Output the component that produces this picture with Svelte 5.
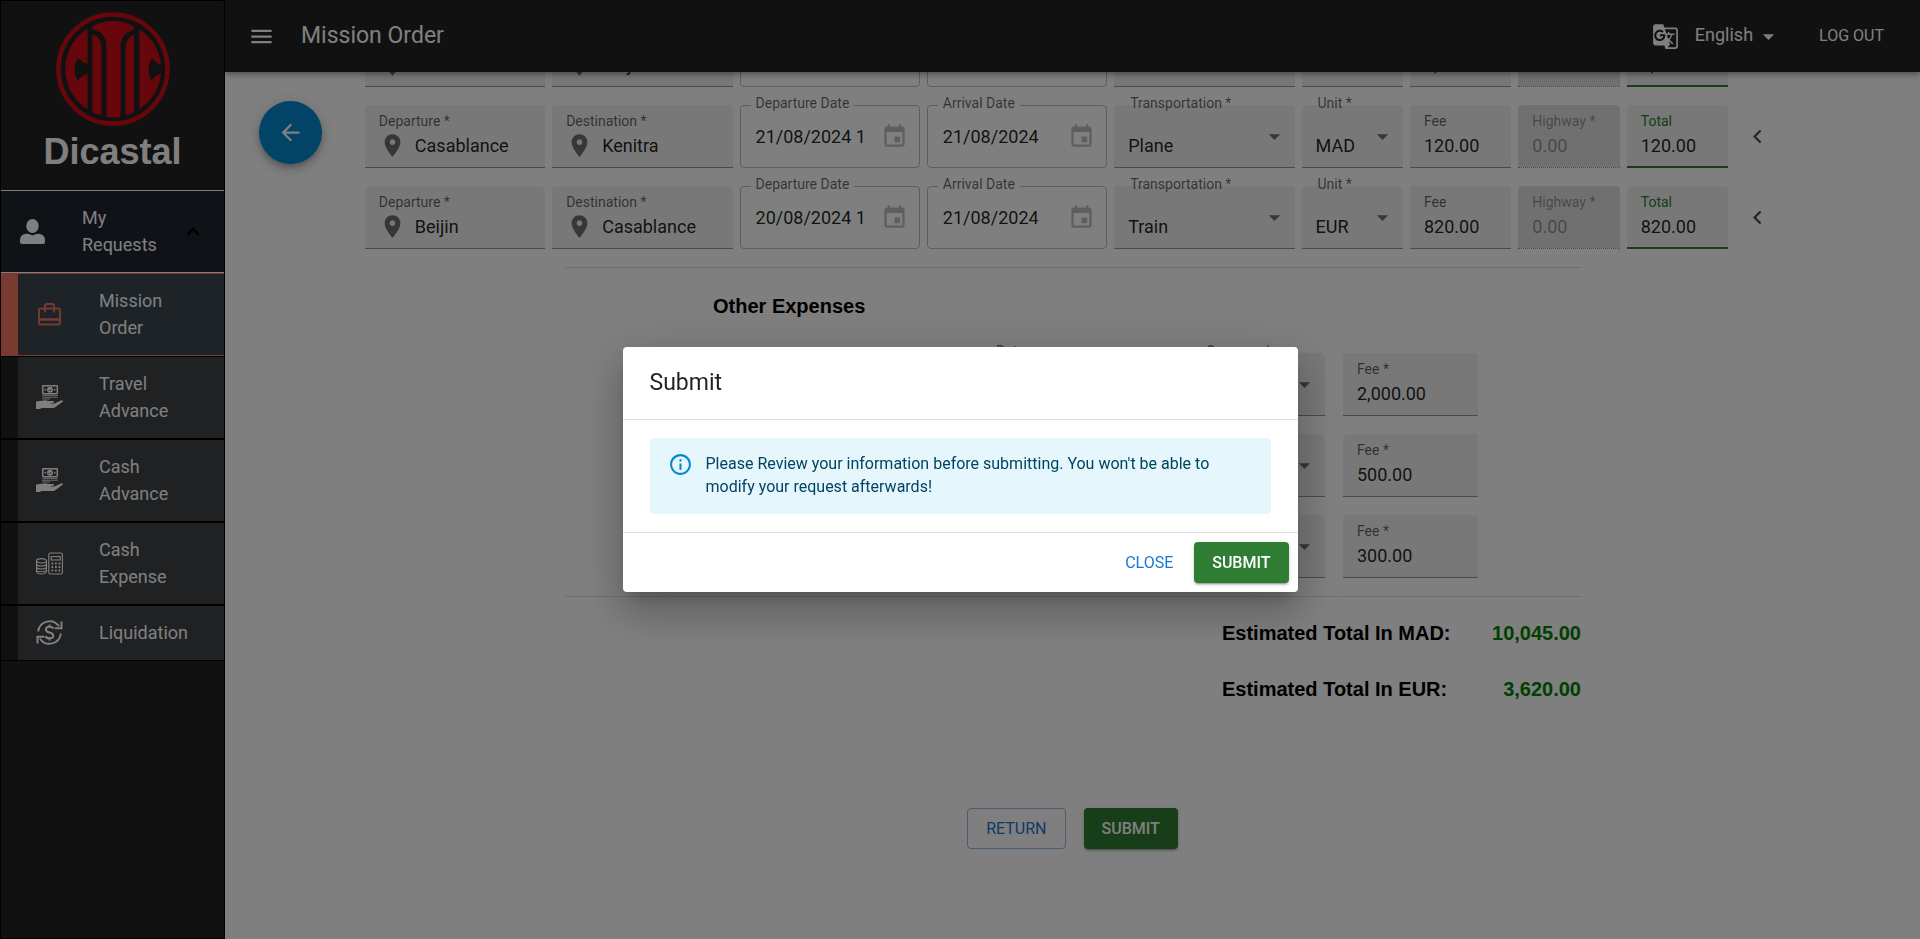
<script>
  const trips = [
    { from: 'Casablance', to: 'Beijin', dep: '18/08/2024 1', arr: '19/08/2024', by: 'Plane', unit: 'EUR', fee: '2,800.00', total: '2,800.00' },
    { from: 'Casablance', to: 'Kenitra', dep: '21/08/2024 10:00', arr: '21/08/2024', by: 'Plane', unit: 'MAD', fee: '120.00', total: '120.00' },
    { from: 'Beijin', to: 'Casablance', dep: '20/08/2024 10:00', arr: '21/08/2024', by: 'Train', unit: 'EUR', fee: '820.00', total: '820.00' }
  ];
  const expenses = [
    { fee: '2,000.00' },
    { fee: '500.00' },
    { fee: '300.00' }
  ];
  const totals = [
    { label: 'Estimated Total In MAD:', value: '10,045.00' },
    { label: 'Estimated Total In EUR:', value: '3,620.00' }
  ];
  const menu = [
    { label: 'Mission Order', icon: 'bag', active: true },
    { label: 'Travel Advance', icon: 'cash' },
    { label: 'Cash Advance', icon: 'cash' },
    { label: 'Cash Expense', icon: 'calc' },
    { label: 'Liquidation', icon: 'cycle' }
  ];
</script>

{#snippet pin()}
  <svg class="icon pin" viewBox="0 0 24 24"><path d="M12 2C8.13 2 5 5.13 5 9c0 5.25 7 13 7 13s7-7.75 7-13c0-3.87-3.13-7-7-7zm0 9.5c-1.38 0-2.5-1.12-2.5-2.5s1.12-2.5 2.5-2.5 2.5 1.12 2.5 2.5-1.12 2.5-2.5 2.5z" /></svg>
{/snippet}

{#snippet caret()}
  <svg class="icon caret" viewBox="0 0 24 24"><path d="M7 10l5 5 5-5z" /></svg>
{/snippet}

{#snippet filled(id, label, value, kind)}
  <div class="field filled {kind}">
    <label for={id}>{label}</label>
    <div class="value">
      {#if kind === 'place'}{@render pin()}{/if}
      <input {id} type="text" {value} disabled={kind === 'disabled'} />
    </div>
  </div>
{/snippet}

{#snippet dated(id, label, value)}
  <fieldset class="field outlined">
    <legend><label for={id}>{label}</label></legend>
    <div class="value">
      <input {id} type="text" {value} />
      <svg class="icon event" viewBox="0 0 24 24"><path d="M17 12h-5v5h5v-5zM16 1v2H8V1H6v2H5c-1.11 0-1.99.9-1.99 2L3 19c0 1.1.89 2 2 2h14c1.1 0 2-.9 2-2V5c0-1.1-.9-2-2-2h-1V1h-2zm3 18H5V8h14v11z" /></svg>
    </div>
  </fieldset>
{/snippet}

{#snippet picked(id, label, value)}
  <div class="field select">
    <label for={id}>{label}</label>
    <select {id}><option>{value}</option></select>
    {@render caret()}
  </div>
{/snippet}

<div class="app">
  <aside>
    <div class="brand">
      <svg viewBox="0 0 114 114" class="logo">
        <circle cx="57" cy="57" r="54.5" fill="none" stroke="#ce0e16" stroke-width="4.6" />
        <g fill="#ce0e16">
          <path d="M31.500 16.500V52Q26 50.500 22.500 46.500Q18.500 50 18.500 57.500Q18.500 65 22 68.500Q26 63 31.500 62V97.500A48 48 0 0 1 31.500 16.500Z" />
          <path d="M36.500 22.500Q45.500 25 45.500 36V103.500L36.500 100.500Z" />
          <path d="M36.500 14.500Q45 9 57 9Q69 9 78 14.500V17.500Q64.500 22 64.500 34V105Q57 106 50.500 105V34Q50 20 36.500 17.500Z" />
          <path d="M78 22.500Q69.500 26 69.500 36V103.500L78 100.500Z" />
          <path d="M83.500 17.500Q103 31 105 53Q100 51.500 96.500 46.500Q92.500 50 92.500 57.500Q92.500 65 96 68.500Q99.500 63 105 61.500Q102.500 84 83.500 97Z" />
        </g>
      </svg>
      <h1>Dicastal</h1>
    </div>
    <button class="group">
      <svg class="user" viewBox="0 0 25 25"><ellipse cx="12.500" cy="7" rx="6.200" ry="7" /><path d="M0 21.500Q0 15.500 6 14.800Q9 14.500 12.500 16.500Q16 14.500 19 14.800Q25 15.500 25 21.500V23Q25 25 23 25H2Q0 25 0 23Z" /></svg>
      <span>My Requests</span>
      <svg class="chev" viewBox="0 0 14 9"><path d="M1.200 7.800L7 2L12.800 7.800" fill="none" stroke="#000" stroke-width="2.400" /></svg>
    </button>
    <nav>
      {#each menu as item}
        <a href="#top" class:active={item.active}>
          {#if item.icon === 'bag'}
            <svg class="mi" viewBox="0 0 27 27" fill="none" stroke="currentColor" stroke-width="1.900"><rect x="3" y="7.500" width="21" height="16" rx="2" /><path d="M3 18.500H24" stroke-width="2.400" /><path d="M9 11.500V5Q9 3 11 3H16Q18 3 18 5V11.500" /></svg>
          {:else if item.icon === 'cash'}
            <svg class="mi" viewBox="0 0 27 27" fill="none"><rect x="6.700" y="1.700" width="14.600" height="8" rx=".6" stroke="currentColor" stroke-width="1.500" /><circle cx="14" cy="5.700" r="3" fill="currentColor" /><circle cx="9.300" cy="5.700" r=".9" fill="currentColor" /><circle cx="18.700" cy="5.700" r=".9" fill="currentColor" /><path d="M12.500 5.800L13.700 7L15.700 4.700" stroke="#3e4246" stroke-width=".8" /><path d="M6.200 11.600H21.800M6.200 13.300H21.800M6.200 15H14" stroke="currentColor" stroke-width="1" opacity=".75" /><path fill="currentColor" d="M0 17.500L8 16.500Q10 16 12 17H17Q18.500 17.200 18 18.500L13 19.500L18.500 19.600L25 16.400Q27 16 27 17.500L19.500 23Q18.500 24 17 24H6L3.500 25H0Z" /></svg>
          {:else if item.icon === 'calc'}
            <svg class="mi" viewBox="0 0 27 27" fill="none" stroke="currentColor" stroke-width="1.100"><rect x="12.800" y="3" width="13.600" height="21" rx="1.600" /><rect x="15.200" y="6.600" width="9" height="3.400" /><path d="M15.500 13.500H24.500M15.500 17H24.500M15.500 20.500H24.500" stroke-width="1.800" stroke-dasharray="1.800 1.700" /><ellipse cx="5.500" cy="10.800" rx="5" ry="2.200" /><path d="M.5 10.800V21.500Q1 24 5.500 24Q10 24 10.500 21.500V10.800M.5 14Q1 16 5.500 16Q10 16 10.500 14M.5 17Q1 19 5.500 19Q10 19 10.500 17M.5 19.800Q1 21.800 5.500 21.800Q10 21.800 10.500 19.800" /></svg>
          {:else}
            <svg class="mi" viewBox="0 0 27 27" fill="none" stroke="currentColor" stroke-width="2"><path d="M2.200 12.500A11.400 11.400 0 0 1 23 7.300M24.800 14.500A11.400 11.400 0 0 1 4 19.700" /><path d="M25.500 2.500V9.300H18.700M1.500 24.500V17.700H8.300" /><path d="M17.300 9.800Q16.800 7.700 13.500 7.700Q9.900 7.700 9.900 10.400Q9.900 12.700 13.500 13.500Q17.300 14.300 17.300 16.800Q17.300 19.300 13.500 19.300Q9.900 19.300 9.600 17M13.500 5.500V7.700M13.500 19.300V21.600" /></svg>
          {/if}
          <span>{item.label}</span>
        </a>
      {/each}
    </nav>
  </aside>

  <main>
    <header>
      <button class="plain" aria-label="Menu"><svg class="icon" viewBox="0 0 24 24"><path d="M3 18h18v-2H3v2zm0-5h18v-2H3v2zm0-7v2h18V6H3z" /></svg></button>
      <h2>Mission Order</h2>
      <button class="plain lang">
        <svg class="icon" viewBox="0 0 24 24"><path d="M21 4H11l-1-3H3c-1.100 0-2 .9-2 2v15c0 1.100.9 2 2 2h8l1 3h9c1.100 0 2-.9 2-2V6c0-1.100-.9-2-2-2zM7 16c-2.760 0-5-2.240-5-5s2.240-5 5-5c1.350 0 2.480.5 3.350 1.300L9.030 8.570c-.38-.36-1.040-.78-2.030-.78-1.740 0-3.150 1.440-3.150 3.210S5.260 14.210 7 14.210c2.010 0 2.840-1.440 2.920-2.410H7v-1.710h4.680c.07.31.12.61.12 1.020C11.800 13.970 9.890 16 7 16zm6.170-5.420h3.700c-.43 1.250-1.110 2.430-2.050 3.470-.31-.35-.6-.72-.86-1.100l-.79-2.370zm8.330 9.920c0 .55-.45 1-1 1H14l2-2.500-1.040-3.100 3.100 3.100.92-.92-3.300-3.250.02-.02c1.130-1.250 1.930-2.690 2.400-4.220H20v-1.300h-4.530V8h-1.290v1.290h-1.440L11.460 5.500h9.040c.55 0 1 .45 1 1v14z" /></svg>
        <span>English</span>
        {@render caret()}
      </button>
      <button class="plain logout">LOG OUT</button>
    </header>

    <div class="page">
      <button class="fab" aria-label="Back"><svg class="icon" viewBox="0 0 24 24"><path d="M20 11H7.830l5.590-5.590L12 4l-8 8 8 8 1.410-1.410L7.830 13H20v-2z" /></svg></button>

      <section class="trips">
        {#each trips as t, i}
          <div class="trip">
            {@render filled(`from${i}`, 'Departure *', t.from, 'place')}
            {@render filled(`to${i}`, 'Destination *', t.to, 'place')}
            {@render dated(`dep${i}`, 'Departure Date', t.dep)}
            {@render dated(`arr${i}`, 'Arrival Date', t.arr)}
            {@render picked(`by${i}`, 'Transportation *', t.by)}
            {@render picked(`unit${i}`, 'Unit *', t.unit)}
            {@render filled(`fee${i}`, 'Fee', t.fee, '')}
            {@render filled(`hw${i}`, 'Highway *', '0.00', 'disabled')}
            {@render filled(`sum${i}`, 'Total', t.total, 'total')}
            <button class="more" aria-label="More"><svg class="icon" viewBox="0 0 24 24"><path d="M15.410 7.410L14 6l-6 6 6 6 1.410-1.410L10.830 12z" /></svg></button>
          </div>
        {/each}
      </section>

      <section class="others">
        <h3>Other Expenses</h3>
        {#each expenses as e, i}
          <div class="expense">
            {@render filled(`desc${i}`, 'Description *', '', '')}
            {@render dated(`date${i}`, 'Date', '')}
            {@render picked(`cur${i}`, 'Currency *', 'MAD')}
            {@render filled(`efee${i}`, 'Fee *', e.fee, '')}
          </div>
        {/each}
      </section>

      <section class="totals">
        {#each totals as t}
          <div><span>{t.label}</span><b>{t.value}</b></div>
        {/each}
      </section>

      <div class="actions">
        <button class="btn outline">RETURN</button>
        <button class="btn green">SUBMIT</button>
      </div>
    </div>
  </main>

  <div class="backdrop">
    <div class="dialog" role="dialog" aria-labelledby="dialog-title">
      <h2 id="dialog-title">Submit</h2>
      <div class="body">
        <div class="alert">
          <svg viewBox="0 0 24 24"><path d="M11 7h2v2h-2zm0 4h2v6h-2zm1-9C6.480 2 2 6.480 2 12s4.480 10 10 10 10-4.480 10-10S17.520 2 12 2zm0 18c-4.410 0-8-3.590-8-8s3.590-8 8-8 8 3.590 8 8-3.590 8-8 8z" /></svg>
          <p>Please Review your information before submitting. You won't be able to modify your request afterwards!</p>
        </div>
      </div>
      <footer>
        <button class="btn text">CLOSE</button>
        <button class="btn green">SUBMIT</button>
      </footer>
    </div>
  </div>
</div>

<style>
  :global(body) { margin: 0; }
  .app, .app * { box-sizing: border-box; }
  .app {
    display: flex;
    height: 100vh;
    overflow: hidden;
    font-family: Roboto, sans-serif;
    font-size: 18px;
    line-height: 27px;
    color: rgba(0, 0, 0, 0.87);
    background: #fff;
  }
  button, input, select { font: inherit; color: inherit; }
  button { border: 0; padding: 0; background: none; cursor: pointer; }
  h1, h2, h3, p { margin: 0; }
  .icon { width: 27px; height: 27px; fill: currentColor; flex: none; display: block; }

  aside {
    flex: none;
    width: 225px;
    background: #222;
    border: 1px solid #000;
    color: #fff;
  }
  .brand { display: flex; flex-direction: column; align-items: center; height: 189px; padding-top: 11px; }
  .logo { width: 114px; height: 114px; }
  h1 { font: bold 36px/44px "Liberation Sans", sans-serif; margin-top: 4px; }
  .group {
    display: flex;
    align-items: center;
    width: 100%;
    padding: 13px 24px 14px 19px;
    border: solid #fff;
    border-width: 1px 0;
    background: #1e242e;
    text-align: left;
  }
  .group span { flex: 1; width: 0; margin: 0 20px 0 37px; }
  .user { width: 25px; height: 25px; fill: #fff; }
  .chev { width: 14px; height: 9px; }
  nav a {
    display: flex;
    align-items: center;
    padding: 13px 24px 14px 35px;
    border: solid #000;
    border-width: 1px 0;
    background: linear-gradient(to right, #222 17px, #3e4246 17px);
    color: #fff;
    text-decoration: none;
  }
  nav a.active { border-color: #f47564; background: linear-gradient(to right, #f47564 17px, #3a464e 17px); }
  nav a.active .mi { color: #f47564; }
  nav span { flex: 1; margin-left: 36px; width: 0; }
  .mi { width: 27px; height: 27px; flex: none; }

  main { flex: 1; min-width: 0; display: flex; flex-direction: column; }
  header {
    position: relative;
    z-index: 2;
    flex: none;
    display: flex;
    align-items: center;
    height: 72px;
    padding: 0 36px 0 23px;
    background: #222;
    color: #fff;
    box-shadow: 0 2px 4px -1px rgba(0, 0, 0, 0.2), 0 4px 5px rgba(0, 0, 0, 0.14), 0 1px 10px rgba(0, 0, 0, 0.12);
  }
  header h2 { flex: 1; margin-left: 26px; font-size: 23px; font-weight: 400; line-height: 36px; }
  .lang { display: flex; align-items: center; }
  .lang span { margin: 0 2px 0 16px; padding-bottom: 3px; }
  .logout { margin-left: 37px; padding-bottom: 2px; font-size: 16px; }

  .page { position: relative; flex: 1; overflow: hidden; }
  .fab {
    position: absolute;
    left: 34px;
    top: 29px;
    width: 63px;
    height: 63px;
    display: grid;
    place-items: center;
    border-radius: 50%;
    background: #0288d1;
    color: #fff;
    box-shadow: 0 3px 5px -1px rgba(0, 0, 0, 0.2), 0 6px 10px rgba(0, 0, 0, 0.14), 0 1px 18px rgba(0, 0, 0, 0.12);
  }
  .trips { display: flex; flex-direction: column; gap: 18px; width: 83.5%; margin: -48px auto 0; }
  .trip { display: grid; grid-template-columns: repeat(5, 361fr) repeat(4, 203fr) 45px; gap: 7px; }
  .more { display: grid; place-items: center; color: rgba(0, 0, 0, 0.7); }

  .field { position: relative; min-width: 0; height: 63px; }
  .field label { display: block; font-size: 14px; line-height: 18px; color: rgba(0, 0, 0, 0.6); white-space: nowrap; }
  .field input, .field select {
    flex: 1;
    width: 100%;
    min-width: 0;
    height: 27px;
    padding: 0;
    border: 0;
    outline: 0;
    background: none;
  }
  .value { display: flex; align-items: center; }
  .filled {
    padding: 7px 14px 0;
    border-radius: 4px 4px 0 0;
    border-bottom: 1px solid rgba(0, 0, 0, 0.42);
    background: rgba(0, 0, 0, 0.06);
    background-clip: padding-box;
  }
  .filled .value { margin-top: 2px; }
  .filled .pin { margin-right: 9px; color: rgba(0, 0, 0, 0.54); }
  .filled.disabled { background-color: rgba(0, 0, 0, 0.12); border-bottom-style: dotted; }
  .filled.disabled label, .filled.disabled input { color: rgba(0, 0, 0, 0.38); }
  .filled.total { border-bottom: 2px solid #2e7d32; }
  .filled.total label { color: #2e7d32; }
  .outlined {
    margin: -9px 0 0;
    height: 72px;
    padding: 0 11px 0 10px;
    border: 1px solid rgba(0, 0, 0, 0.26);
    border-radius: 4px;
  }
  .outlined legend { padding: 0 5px; height: 18px; }
  .outlined legend label { line-height: 14px; }
  .outlined .value { margin-top: 9px; padding-left: 5px; gap: 17px; }
  .event { color: rgba(0, 0, 0, 0.26); }
  .select {
    border-radius: 4px 4px 0 0;
    border-bottom: 1px solid rgba(0, 0, 0, 0.42);
    background: rgba(0, 0, 0, 0.06);
    background-clip: padding-box;
  }
  .select label { position: absolute; left: 16px; top: -11px; }
  .select select { appearance: none; height: 62px; padding: 18px 32px 0 14px; }
  .select .caret { position: absolute; right: 7px; top: 18px; color: rgba(0, 0, 0, 0.54); pointer-events: none; }

  .others {
    width: 60%;
    margin: 18px auto 0;
    padding: 0 103px 18px;
    border: solid rgba(0, 0, 0, 0.12);
    border-width: 1px 0;
    display: flex;
    flex-direction: column;
    gap: 18px;
  }
  h3 { font: bold 20px/28px "Liberation Sans", sans-serif; color: #000; margin: 24px 0 15px 46px; }
  .expense { display: grid; grid-template-columns: 295fr 192fr 135fr 135fr; gap: 18px; }
  .totals { width: 60%; margin: 22px auto 0; display: flex; flex-direction: column; gap: 28px; font: bold 20px/28px "Liberation Sans", sans-serif; color: #000; }
  .totals div { display: grid; grid-template-columns: 1fr 224px 135px; }
  .totals span { grid-column: 2; white-space: nowrap; }
  .totals b { text-align: right; color: green; }
  .actions { display: flex; justify-content: center; gap: 18px; margin-top: 105px; }

  .btn { height: 41px; min-width: 72px; padding: 0 18px; border-radius: 4px; font-size: 16px; font-weight: 500; line-height: 28px; }
  .btn.outline { border: 1px solid rgba(25, 118, 210, 0.5); color: #1976d2; font-weight: 400; }
  .btn.text { padding: 0 9px; color: #1976d2; font-weight: 400; }
  .btn.green {
    background: #2e7d32;
    color: #fff;
    box-shadow: 0 3px 1px -2px rgba(0, 0, 0, 0.2), 0 2px 2px rgba(0, 0, 0, 0.14), 0 1px 5px rgba(0, 0, 0, 0.12);
  }

  .backdrop {
    position: fixed;
    inset: 0;
    z-index: 10;
    display: grid;
    place-items: center;
    background: rgba(0, 0, 0, 0.5);
  }
  .dialog {
    width: 675px;
    max-width: 90%;
    border-radius: 4px;
    background: #fff;
    box-shadow: 0 11px 15px -7px rgba(0, 0, 0, 0.2), 0 24px 38px 3px rgba(0, 0, 0, 0.14), 0 9px 46px 8px rgba(0, 0, 0, 0.12);
  }
  .dialog h2 { padding: 18px 27px; font-size: 23px; font-weight: 400; line-height: 36px; }
  .body { padding: 18px 27px; border: solid rgba(0, 0, 0, 0.12); border-width: 1px 0; }
  .alert { display: flex; padding: 14px 18px 16px; border-radius: 4px; background: #e5f6fd; color: #014361; }
  .alert svg { flex: none; width: 25px; height: 25px; margin-right: 13px; fill: #0288d1; }
  .alert p { font-size: 16px; line-height: 23px; }
  footer { display: flex; justify-content: flex-end; gap: 9px; padding: 9px; }
</style>
